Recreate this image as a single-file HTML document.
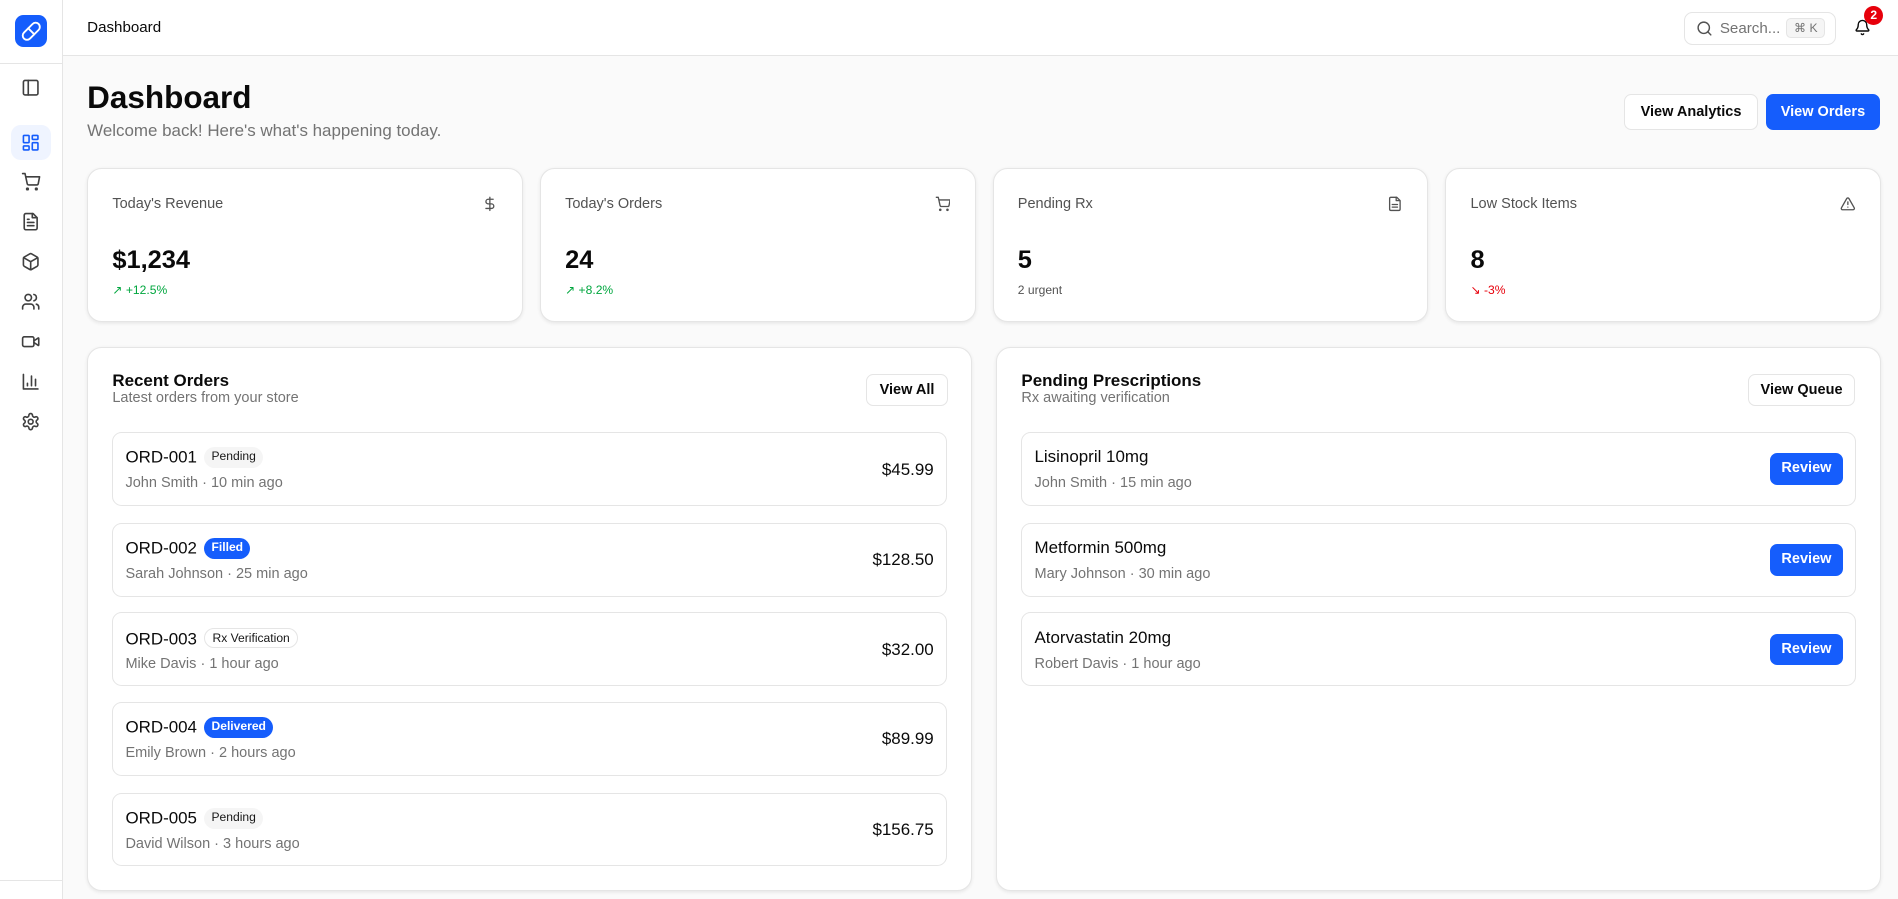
<!DOCTYPE html>
<html><head><meta charset="utf-8"><style>
html{zoom:1.21046}
*{box-sizing:border-box;margin:0;padding:0}
body{width:1568px;height:743px;overflow:hidden;background:#fafafa;font-family:"Liberation Sans",sans-serif;color:#0a0a0a;position:relative}
.side{position:absolute;left:0;top:0;width:52px;height:743px;background:#fff;border-right:1px solid #e5e5e5}
.logo{position:absolute;left:12px;top:12px;width:27px;height:27px;border-radius:7px;background:#155dfc;display:flex;align-items:center;justify-content:center}
.sideline{position:absolute;left:0;top:52px;width:52px;border-top:1px solid #e5e5e5}
.sideline2{position:absolute;left:0;top:727px;width:52px;border-top:1px solid #e5e5e5}
.si{position:absolute;left:9px;width:33px;height:29px;border-radius:8px;display:flex;align-items:center;justify-content:center}
.si svg{width:16px;height:16px;fill:none;stroke:#404040;stroke-width:2;stroke-linecap:round;stroke-linejoin:round}
.head{position:absolute;left:52px;top:0;right:0;height:46px;background:#fff;border-bottom:1px solid #e5e5e5}
.head .t{position:absolute;left:20px;top:16px;font-size:12.5px}
.search{position:absolute;left:1339px;top:10px;width:126px;height:27px;border:1px solid #e5e5e5;border-radius:7px;font-size:12.5px;color:#737373}
.kbd{position:absolute;left:84px;top:4px;width:32px;height:17px;background:#f5f5f5;border:1px solid #e5e5e5;border-radius:4px;font-size:10px;color:#737373;text-align:center;line-height:15px}
.badge{position:absolute;left:1488px;top:5px;width:16px;height:16px;border-radius:8px;background:#e7000b;color:#fff;font-size:10px;font-weight:bold;text-align:center;line-height:16px}
h1{position:absolute;left:72px;top:66px;font-size:26px;font-weight:bold}
.sub{position:absolute;left:72px;top:100px;font-size:14px;color:#737373}
.btn{position:absolute;height:29px;border-radius:6px;font-size:12px;font-weight:bold;display:flex;align-items:center;justify-content:center}
.out{background:#fff;border:1px solid #e5e5e5;color:#0a0a0a}
.pri{background:#155dfc;color:#fff}
.card{position:absolute;background:#fff;border:1px solid #e5e5e5;border-radius:12px;box-shadow:0 1px 3px rgba(0,0,0,.08)}
.stat{top:139px;width:360px;height:127px}
.stat .l{position:absolute;left:20px;top:22px;font-size:12px;color:#525252}
.stat .v{position:absolute;left:20px;top:63px;font-size:21px;font-weight:bold}
.stat .c{position:absolute;left:20px;top:94px;font-size:10px}
.stat svg.ic{position:absolute;right:20px;top:22px;width:13px;height:13px;fill:none;stroke:#525252;stroke-width:2;stroke-linecap:round;stroke-linejoin:round}
.big{top:287px;height:449px;width:731px}
.big .tt{position:absolute;left:20px;top:19px;font-size:14px;font-weight:bold}
.big .ts{position:absolute;left:20px;top:34px;font-size:12px;color:#737373}
.row{position:absolute;left:20px;right:20px;height:61px;border:1px solid #e5e5e5;border-radius:8px}
.row .n{position:absolute;left:10px;top:12px;font-size:14px}
.row .m{position:absolute;left:10px;top:35px;font-size:12px;color:#737373}
.row .p{position:absolute;right:10px;top:22px;font-size:14px}
.tag{display:inline-block;font-size:10px;padding:0 6px;height:17px;line-height:16px;border-radius:9px;margin-left:6px;vertical-align:2px}
.tg{background:#f5f5f5;color:#171717}
.tb{background:#155dfc;color:#fff;font-weight:bold}
.to{border:1px solid #e5e5e5;color:#171717}
.rv{position:absolute;right:10px;top:17px;width:60px;height:26px;border-radius:6px;background:#155dfc;color:#fff;font-size:12px;font-weight:bold;text-align:center;line-height:26px}
</style></head><body>
<div class="side">
<div class="logo"><svg width="17" height="17" viewBox="0 0 24 24" fill="none" stroke="#fff" stroke-width="2.2" stroke-linecap="round"><path d="M10.5 20.5 20.5 10.5a4.95 4.95 0 1 0-7-7L3.5 13.5a4.95 4.95 0 1 0 7 7Z"/><path d="m8.5 8.5 7 7"/></svg></div>
<div class="sideline"></div>
<div class="si" style="top:58px"><svg viewBox="0 0 24 24"><rect x="3" y="3" width="18" height="18" rx="2"/><path d="M9 3v18"/></svg></div>
<div class="si" style="top:103px;background:#eff4ff"><svg viewBox="0 0 24 24" style="stroke:#155dfc"><rect x="3" y="3" width="7" height="9" rx="1"/><rect x="14" y="3" width="7" height="5" rx="1"/><rect x="14" y="12" width="7" height="9" rx="1"/><rect x="3" y="16" width="7" height="5" rx="1"/></svg></div>
<div class="si" style="top:136px"><svg viewBox="0 0 24 24"><circle cx="8" cy="21" r="1"/><circle cx="19" cy="21" r="1"/><path d="M2 2h3l2.7 12.4a2 2 0 0 0 2 1.6h9.7a2 2 0 0 0 2-1.6L23 6H6"/></svg></div>
<div class="si" style="top:169px"><svg viewBox="0 0 24 24"><path d="M15 2H6a2 2 0 0 0-2 2v16a2 2 0 0 0 2 2h12a2 2 0 0 0 2-2V7Z"/><path d="M14 2v5h5M16 13H8M16 17H8M10 9H8"/></svg></div>
<div class="si" style="top:202px"><svg viewBox="0 0 24 24"><path d="M21 8a2 2 0 0 0-1-1.7l-7-4a2 2 0 0 0-2 0l-7 4A2 2 0 0 0 3 8v8a2 2 0 0 0 1 1.7l7 4a2 2 0 0 0 2 0l7-4a2 2 0 0 0 1-1.7Z"/><path d="M3.3 7 12 12l8.7-5M12 22V12"/></svg></div>
<div class="si" style="top:235px"><svg viewBox="0 0 24 24"><path d="M16 21v-2a4 4 0 0 0-4-4H6a4 4 0 0 0-4 4v2"/><circle cx="9" cy="7" r="4"/><path d="M22 21v-2a4 4 0 0 0-3-3.9M16 3.1a4 4 0 0 1 0 7.8"/></svg></div>
<div class="si" style="top:268px"><svg viewBox="0 0 24 24"><path d="m16 13 5.2 3.5a.5.5 0 0 0 .8-.4V7.9a.5.5 0 0 0-.8-.4L16 11"/><rect x="2" y="6" width="14" height="12" rx="2"/></svg></div>
<div class="si" style="top:301px"><svg viewBox="0 0 24 24"><path d="M3 3v18h18M18 17V9M13 17V5M8 17v-3"/></svg></div>
<div class="si" style="top:334px"><svg viewBox="0 0 24 24"><path d="M12.2 2h-.4a2 2 0 0 0-2 2v.2a2 2 0 0 1-1 1.7l-.4.3a2 2 0 0 1-2 0l-.2-.1a2 2 0 0 0-2.7.7l-.2.4a2 2 0 0 0 .7 2.7l.2.1a2 2 0 0 1 1 1.7v.5a2 2 0 0 1-1 1.7l-.2.1a2 2 0 0 0-.7 2.7l.2.4a2 2 0 0 0 2.7.7l.2-.1a2 2 0 0 1 2 0l.4.3a2 2 0 0 1 1 1.7v.2a2 2 0 0 0 2 2h.4a2 2 0 0 0 2-2v-.2a2 2 0 0 1 1-1.7l.4-.3a2 2 0 0 1 2 0l.2.1a2 2 0 0 0 2.7-.7l.2-.4a2 2 0 0 0-.7-2.7l-.2-.1a2 2 0 0 1-1-1.7v-.5a2 2 0 0 1 1-1.7l.2-.1a2 2 0 0 0 .7-2.7l-.2-.4a2 2 0 0 0-2.7-.7l-.2.1a2 2 0 0 1-2 0l-.4-.3a2 2 0 0 1-1-1.7V4a2 2 0 0 0-2-2z"/><circle cx="12" cy="12" r="3"/></svg></div>
<div class="sideline2"></div>
</div>
<div class="head"><div class="t">Dashboard</div>
<div class="search"><svg style="position:absolute;left:9px;top:6px" width="14" height="14" viewBox="0 0 24 24" fill="none" stroke="#525252" stroke-width="2" stroke-linecap="round"><circle cx="11" cy="11" r="8"/><path d="m21 21-4.3-4.3"/></svg><span style="position:absolute;left:29px;top:6px">Search...</span><div class="kbd">⌘ K</div></div>
<svg style="position:absolute;left:1480px;top:16px" width="14" height="14" viewBox="0 0 24 24" fill="none" stroke="#0a0a0a" stroke-width="2" stroke-linecap="round"><path d="M10.3 21a1.9 1.9 0 0 0 3.4 0M3.3 15.3A1 1 0 0 0 4 17h16a1 1 0 0 0 .7-1.7C19.4 14 18 12.5 18 8A6 6 0 0 0 6 8c0 4.5-1.4 6-2.7 7.3"/></svg>
<div class="badge">2</div>
</div>
<h1>Dashboard</h1>
<div class="sub">Welcome back! Here's what's happening today.</div>
<div class="btn out" style="left:1342px;top:78px;width:110px">View Analytics</div>
<div class="btn pri" style="left:1459px;top:78px;width:94px">View Orders</div>

<div class="card stat" style="left:72px"><div class="l">Today's Revenue</div><svg class="ic" viewBox="0 0 24 24"><path d="M12 2v20M17 5H9.5a3.5 3.5 0 0 0 0 7h5a3.5 3.5 0 0 1 0 7H6"/></svg><div class="v">$1,234</div><div class="c" style="color:#00a63e">↗ +12.5%</div></div>
<div class="card stat" style="left:446px"><div class="l">Today's Orders</div><svg class="ic" viewBox="0 0 24 24"><circle cx="8" cy="21" r="1"/><circle cx="19" cy="21" r="1"/><path d="M2 2h3l2.7 12.4a2 2 0 0 0 2 1.6h9.7a2 2 0 0 0 2-1.6L23 6H6"/></svg><div class="v">24</div><div class="c" style="color:#00a63e">↗ +8.2%</div></div>
<div class="card stat" style="left:820px"><div class="l">Pending Rx</div><svg class="ic" viewBox="0 0 24 24"><path d="M15 2H6a2 2 0 0 0-2 2v16a2 2 0 0 0 2 2h12a2 2 0 0 0 2-2V7Z"/><path d="M14 2v5h5M16 13H8M16 17H8"/></svg><div class="v">5</div><div class="c" style="color:#525252">2 urgent</div></div>
<div class="card stat" style="left:1194px"><div class="l">Low Stock Items</div><svg class="ic" viewBox="0 0 24 24"><path d="m21.7 18-8-14a2 2 0 0 0-3.5 0l-8 14A2 2 0 0 0 4 21h16a2 2 0 0 0 1.7-3ZM12 9v4M12 17h.01"/></svg><div class="v">8</div><div class="c" style="color:#e7000b">↘ -3%</div></div>

<div class="card big" style="left:72px">
<div class="tt">Recent Orders</div><div class="ts">Latest orders from your store</div>
<div class="btn out" style="left:643px;top:21px;width:67px;height:27px">View All</div>
<div class="row" style="top:69px"><div class="n">ORD-001<span class="tag tg">Pending</span></div><div class="m">John Smith · 10 min ago</div><div class="p">$45.99</div></div>
<div class="row" style="top:144px"><div class="n">ORD-002<span class="tag tb">Filled</span></div><div class="m">Sarah Johnson · 25 min ago</div><div class="p">$128.50</div></div>
<div class="row" style="top:218px"><div class="n">ORD-003<span class="tag to">Rx Verification</span></div><div class="m">Mike Davis · 1 hour ago</div><div class="p">$32.00</div></div>
<div class="row" style="top:292px"><div class="n">ORD-004<span class="tag tb">Delivered</span></div><div class="m">Emily Brown · 2 hours ago</div><div class="p">$89.99</div></div>
<div class="row" style="top:367px"><div class="n">ORD-005<span class="tag tg">Pending</span></div><div class="m">David Wilson · 3 hours ago</div><div class="p">$156.75</div></div>
</div>
<div class="card big" style="left:823px">
<div class="tt">Pending Prescriptions</div><div class="ts">Rx awaiting verification</div>
<div class="btn out" style="left:620px;top:21px;width:89px;height:27px">View Queue</div>
<div class="row" style="top:69px"><div class="n">Lisinopril 10mg</div><div class="m">John Smith · 15 min ago</div><div class="rv">Review</div></div>
<div class="row" style="top:144px"><div class="n">Metformin 500mg</div><div class="m">Mary Johnson · 30 min ago</div><div class="rv">Review</div></div>
<div class="row" style="top:218px"><div class="n">Atorvastatin 20mg</div><div class="m">Robert Davis · 1 hour ago</div><div class="rv">Review</div></div>
</div>
</body></html>
